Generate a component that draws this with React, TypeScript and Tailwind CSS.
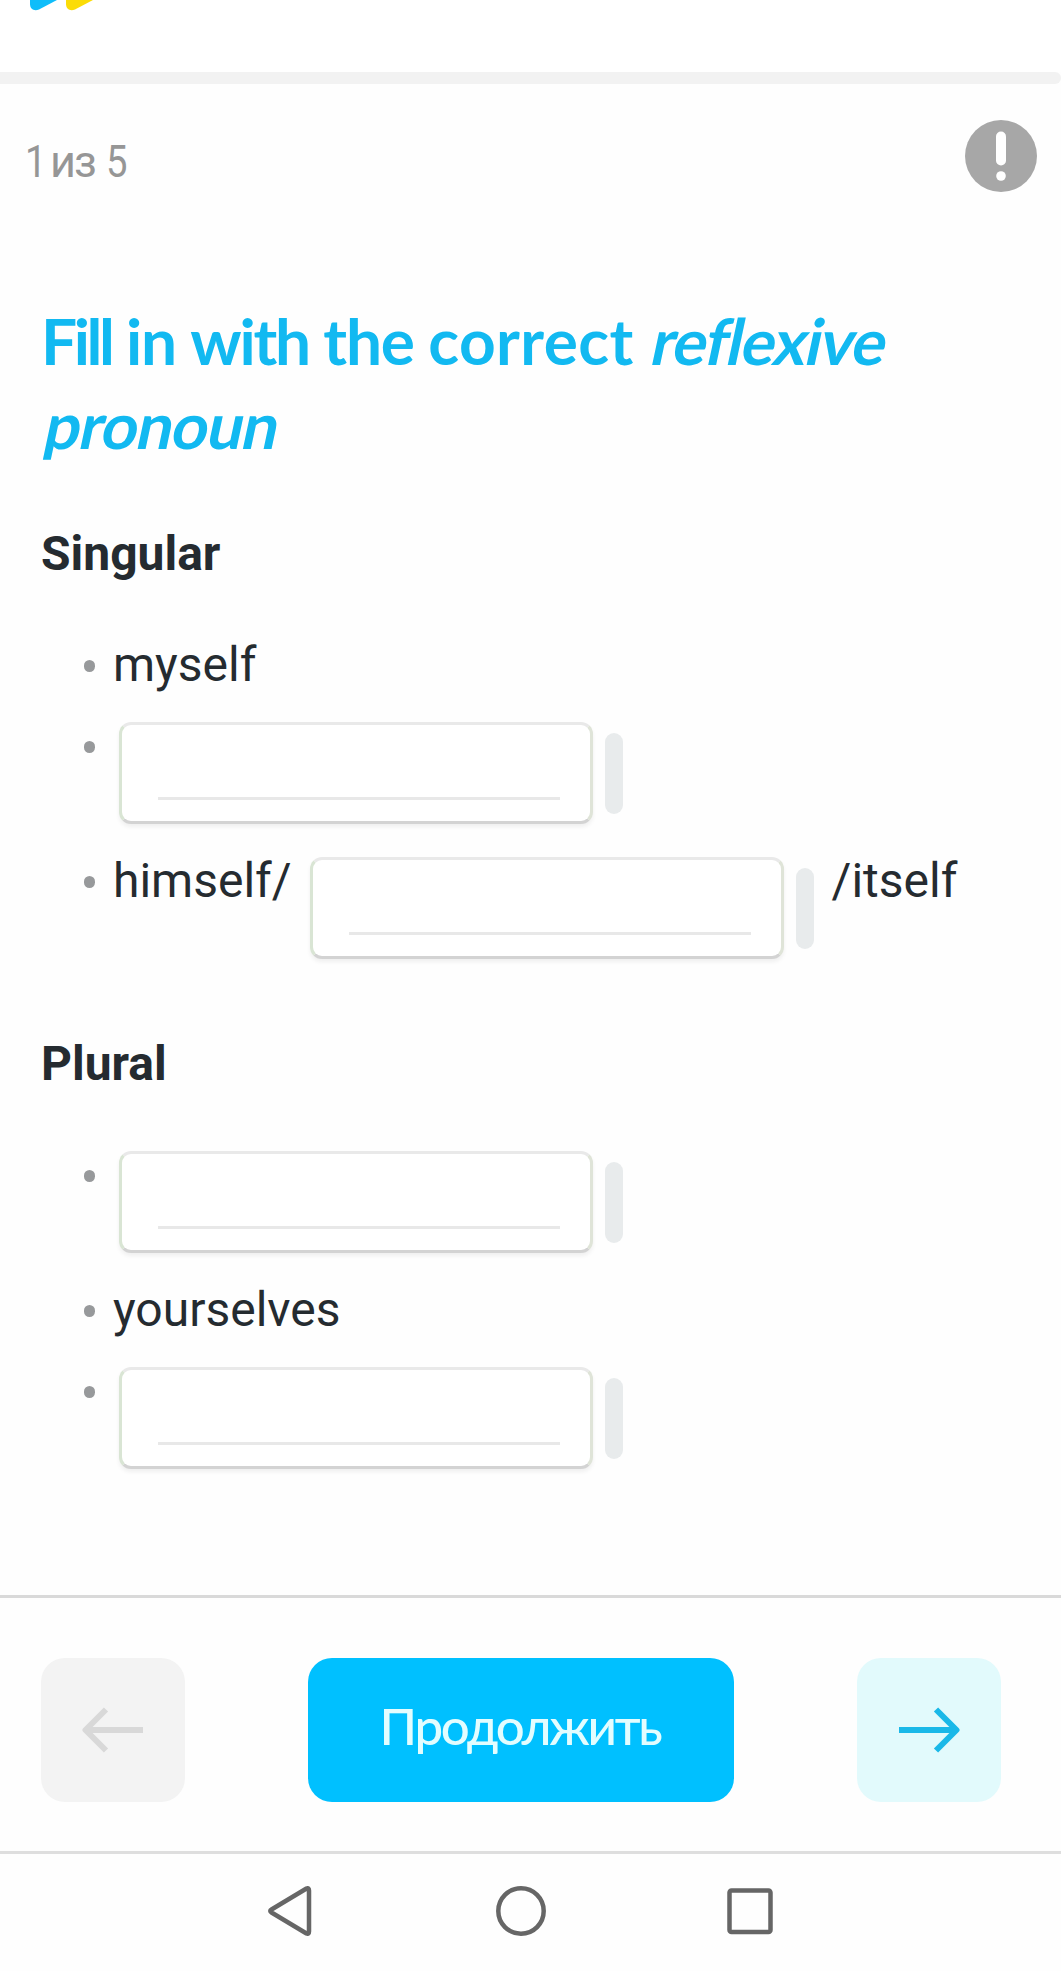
import { useState } from 'react';

type Part = string | { blank: string };

const sections: { title: string; items: Part[][] }[] = [
  {
    title: 'Singular',
    items: [['myself'], [{ blank: 'yourself' }], ['himself/', { blank: 'herself' }, '/itself']],
  },
  {
    title: 'Plural',
    items: [[{ blank: 'ourselves' }], ['yourselves'], [{ blank: 'themselves' }]],
  },
];

function Logo() {
  return (
    <svg width="80" height="12" viewBox="0 0 80 12" className="block">
      <path d="M0 0 V4 C0 9 4 11.5 9 9.5 L27 0 Z" fill="#0fbdfa" />
      <path d="M36 0 V4 C36 9 40 11.5 45 9.5 L63 0 Z" fill="#fbdc07" />
    </svg>
  );
}

function Alert() {
  return (
    <svg width="72" height="72" viewBox="0 0 72 72">
      <circle cx="36" cy="36" r="36" fill="#a7a7a7" />
      <rect x="31" y="11.5" width="10" height="34" rx="5" fill="#fff" />
      <circle cx="36" cy="56" r="4.8" fill="#fff" />
    </svg>
  );
}

function Arrow({ className }: { className?: string }) {
  return (
    <svg width="62" height="48" viewBox="0 0 62 48" fill="none" stroke="currentColor" strokeWidth="6" className={className}>
      <path d="M1 24 H58" />
      <path d="M38 3.5 L58.5 24 L38 44.5" strokeLinejoin="round" />
    </svg>
  );
}

function Blank({ value, onChange }: { value: string; onChange: (value: string) => void }) {
  return (
    <span className="mt-[17px] flex items-start gap-3">
      <span className="flex h-[102px] w-[474px] rounded-xl border-[3px] border-t-[#e9e9e9] border-r-[#dfe4d8] border-b-[#d3d3d3] border-l-[#d9e5d4] bg-white pt-3 pr-[30px] pb-[21px] pl-9 shadow-[0_3px_4px_rgba(0,0,0,0.06)]">
        <input
          value={value}
          onChange={(e) => onChange(e.target.value)}
          className="h-full w-full border-b-[3px] border-[#e8e8e8] text-center outline-none"
        />
      </span>
      <span className="mt-[11px] h-[81px] w-[18px] rounded-full bg-[#e8ebec]" />
    </span>
  );
}

export default function App() {
  const [answers, setAnswers] = useState<Record<string, string>>({});

  return (
    <div className="flex h-[1971px] w-[1061px] flex-col overflow-hidden bg-[#fefefe] font-[Roboto,sans-serif] text-[#252b30]">
      {/* Header */}
      <header className="h-[72px] shrink-0 bg-white pl-[30px]">
        <Logo />
      </header>
      <div className="h-3 shrink-0 rounded-r-full bg-[#f2f2f2]" />

      {/* Progress */}
      <div className="mt-9 flex h-[72px] shrink-0 items-center justify-between pr-6 pl-[25px]">
        <p className="flex pt-3 text-[45px] text-[#969696]">
          <span className="w-[25px] origin-left scale-x-85">1</span>
          <span className="w-[56px] tracking-[-2px]">из</span>
          <span className="origin-left scale-x-85">5</span>
        </p>
        <Alert />
      </div>

      {/* Exercise */}
      <main className="mt-[107px] flex-1 pl-[41px]">
        <h1 className="w-[940px] font-[Lato,sans-serif] text-[64px] leading-[84px] font-bold tracking-[-1.2px] text-[#12b9f1]">
          <span className="tracking-[-3.4px]">Fill</span> in <span className="tracking-[-2.2px]">with</span> the{' '}
          <span className="tracking-[0.4px]">correct</span>{' '}
          <em className="inline-block origin-[0_80%] -skew-x-12 tracking-[-1.4px] not-italic">reflexive</em>{' '}
          <em className="inline-block origin-[0_80%] -skew-x-12 tracking-[-1.2px] not-italic">pronoun</em>
        </h1>

        {sections.map((section, index) => (
          <section key={section.title} className={index === 0 ? 'pt-[59px]' : 'pt-[61px]'}>
            <h2 className="text-5xl leading-[56px] font-bold">{section.title}</h2>
            <ul className="mt-[42px] pl-[43px]">
              {section.items.map((parts, i) => (
                <li key={i} className="flex items-start text-5xl leading-[81px]">
                  <span className="mt-9 mr-[18px] h-[12px] w-[11px] shrink-0 rounded-full bg-[#97999b]" />
                  {parts.map((part) =>
                    typeof part === 'string' ? (
                      <span key={part}>{part}</span>
                    ) : (
                      <span key={part.blank} className={parts.length > 1 ? 'mr-[18px] mb-4 ml-[18px]' : 'mb-4 ml-1.5'}>
                        <Blank
                          value={answers[part.blank] ?? ''}
                          onChange={(value) => setAnswers({ ...answers, [part.blank]: value })}
                        />
                      </span>
                    )
                  )}
                </li>
              ))}
            </ul>
          </section>
        ))}
      </main>

      {/* Controls */}
      <footer className="flex h-[256px] shrink-0 items-start justify-between border-t-[3px] border-[#d9d9d9] pt-[60px] pr-[60px] pl-[41px]">
        <button className="flex h-36 w-36 items-center justify-center rounded-3xl bg-[#f3f3f3] text-[#d8d8d8]">
          <Arrow className="rotate-180" />
        </button>
        <button className="h-36 w-[426px] rounded-3xl bg-[#00c0ff] pr-0.5 pb-2 font-[Lato,sans-serif] text-[51px] font-medium tracking-[-2.3px] text-[#e3fdff]">
          Продолжить
        </button>
        <button className="flex h-36 w-36 items-center justify-center rounded-3xl bg-[#e2fafc] text-[#1ab8e8]">
          <Arrow />
        </button>
      </footer>

      {/* System navigation */}
      <nav className="flex h-[120px] shrink-0 items-start border-t-[3px] border-[#dedede] pt-8 pl-[267px]">
        <svg width="507" height="50" viewBox="0 0 507 50" fill="none" stroke="#666" strokeWidth="4.5" strokeLinejoin="round">
          <path d="M39.5 2.5 Q42 1.5 42 4.5 V45.5 Q42 48.5 39.5 47.5 L4.5 26.5 Q2 25 4.5 23.5 Z" />
          <circle cx="254" cy="25" r="22.7" />
          <rect x="462.5" y="4.5" width="41" height="41.5" rx="2" />
        </svg>
      </nav>
    </div>
  );
}
